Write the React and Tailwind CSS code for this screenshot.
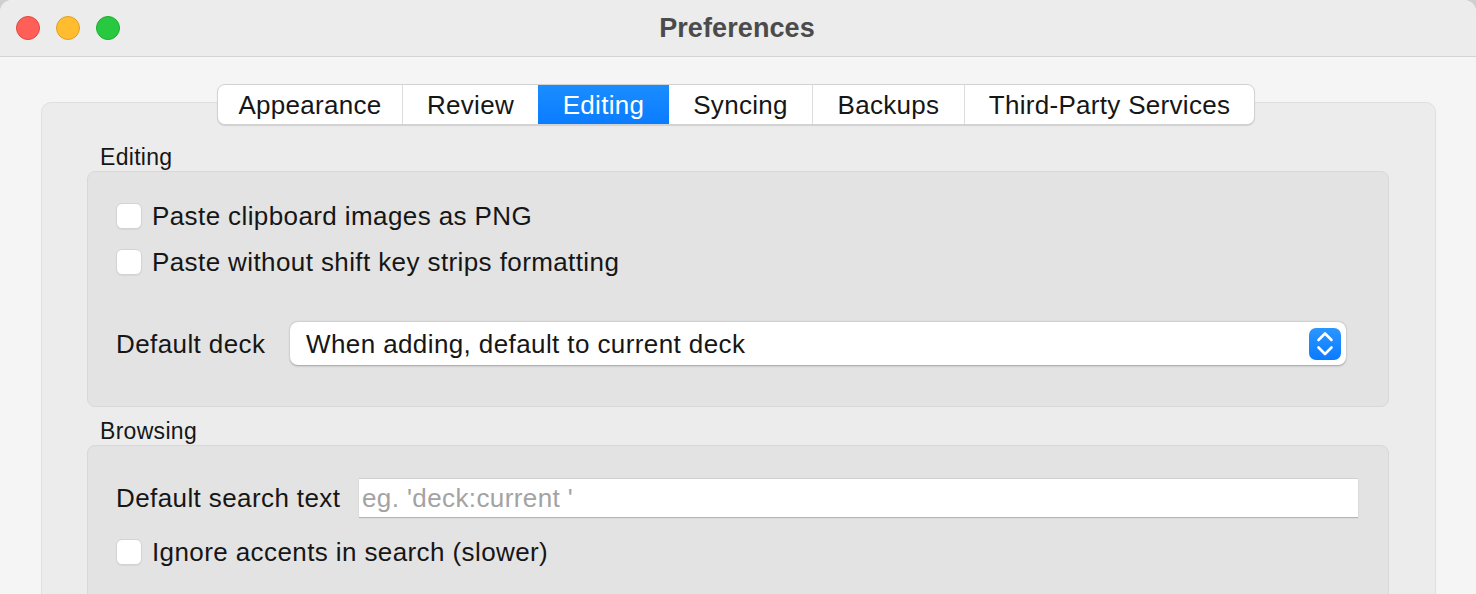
const tabs = [
  { label: "Appearance", w: "w-[184px]" },
  { label: "Review", w: "w-[136px]" },
  { label: "Editing", w: "w-[131px]", active: true },
  { label: "Syncing", w: "w-[143px]" },
  { label: "Backups", w: "w-[152px]" },
  { label: "Third-Party Services", w: "w-[290px]" },
]

const Checkbox = () => (
  <span className="block w-[26px] h-[26px] shrink-0 rounded-[6px] bg-white border border-[#d3d3d3] shadow-[0_1px_1px_rgba(0,0,0,0.06)]" />
)

const CheckRow = ({ label, className = "" }) => (
  <div className={`flex items-center h-[36px] gap-[10px] ${className}`}>
    <Checkbox />
    <span className="text-[26px] leading-none tracking-[0.4px]">{label}</span>
  </div>
)

const Stepper = () => (
  <svg width="32" height="32" viewBox="0 0 32 32" className="shrink-0">
    <defs>
      <linearGradient id="stp" x1="0" y1="0" x2="0" y2="1">
        <stop offset="0" stopColor="#2b96ff" />
        <stop offset="1" stopColor="#0a7bff" />
      </linearGradient>
    </defs>
    <rect x="0" y="0" width="32" height="32" rx="7" fill="url(#stp)" />
    <path d="M9.5 12 L16 5.5 L22.5 12" fill="none" stroke="#fff" strokeWidth="2.6" strokeLinecap="round" strokeLinejoin="round" />
    <path d="M9.5 19.5 L16 26 L22.5 19.5" fill="none" stroke="#fff" strokeWidth="2.6" strokeLinecap="round" strokeLinejoin="round" />
  </svg>
)

const App = () => {
  return (
    <div className="w-[1476px] h-[594px] overflow-hidden bg-[#cfcfcf] font-['Liberation_Sans',Arial,sans-serif] text-[#161616]">
      <div className="h-full rounded-t-[12px] overflow-hidden bg-[#f5f5f5]">
        {/* title bar */}
        <div className="h-[57px] grid grid-cols-[1fr_auto_1fr] items-center bg-[#ececec] border-b border-[#d4d4d4]">
          <div className="flex items-center gap-[16px] pl-[16px]">
            <span className="block w-[24px] h-[24px] rounded-full bg-[#ff5f57] border border-[#e2463f]" />
            <span className="block w-[24px] h-[24px] rounded-full bg-[#febc2e] border border-[#dfa123]" />
            <span className="block w-[24px] h-[24px] rounded-full bg-[#28c840] border border-[#1dad2b]" />
          </div>
          <div className="text-[27px] font-bold text-[#4b4b4b] leading-none pr-[2px] tracking-[0.1px]">Preferences</div>
          <div />
        </div>

        {/* content */}
        <div className="pt-[27px]">
          <div className="relative z-10 flex justify-center pr-[4px]">
            <div className="flex h-[41px] rounded-[8px] bg-white border border-[#d2d2d2] shadow-[0_1px_1px_rgba(0,0,0,0.12)] overflow-hidden">
              {tabs.map((t, i) => {
                const divider = i > 0 && !t.active && !tabs[i - 1].active
                return (
                  <div
                    key={t.label}
                    className={`${t.w} h-full flex items-center justify-center text-[26px] leading-none tracking-[0.3px] ${
                      t.active ? "bg-gradient-to-b from-[#1a8dff] to-[#0a7cff] text-white" : ""
                    } ${divider ? "border-l border-[#dcdcdc]" : ""}`}
                  >
                    {t.label}
                  </div>
                )
              })}
            </div>
          </div>

          <div className="ml-[41px] w-[1395px] -mt-[23px] h-[520px] bg-[#ececec] border border-[#dfdfdf] rounded-[10px] pt-[42px] pl-[45px] pr-[46px]">
            <div className="h-[24px] pl-[13px] text-[23px] leading-[24px] tracking-[0.3px]">Editing</div>
            <div className="mt-[2px] bg-[#e3e3e3] border border-[#d8d8d8] rounded-[8px] pt-[26px] pb-[41px] pl-[28px]">
              <CheckRow label="Paste clipboard images as PNG" />
              <CheckRow label="Paste without shift key strips formatting" className="mt-[10px]" />
              <div className="mt-[42px] flex items-center h-[43px]">
                <span className="w-[174px] text-[26px] leading-none tracking-[0.4px]">Default deck</span>
                <div className="w-[1056px] h-[43px] flex items-center justify-between pl-[16px] pr-[5px] bg-white rounded-[8px] shadow-[0_0.5px_2px_rgba(0,0,0,0.3)]">
                  <span className="text-[26px] leading-none tracking-[0.4px]">When adding, default to current deck</span>
                  <Stepper />
                </div>
              </div>
            </div>

            <div className="mt-[12px] h-[24px] pl-[13px] text-[23px] leading-[24px] tracking-[0.3px]">Browsing</div>
            <div className="mt-[2px] h-[200px] bg-[#e3e3e3] border border-[#d8d8d8] rounded-[8px] pt-[32px] pl-[28px]">
              <div className="flex items-center h-[39px]">
                <span className="w-[243px] text-[26px] leading-none tracking-[0.4px]">Default search text</span>
                <div className="w-[999px] h-[39px] flex items-center pl-[3px] bg-white border-t border-[#d0d0d0] shadow-[0_1px_1px_rgba(0,0,0,0.2)]">
                  <span className="text-[26px] leading-none tracking-[0.4px] text-[#a3a3a3]">eg. 'deck:current '</span>
                </div>
              </div>
              <CheckRow label="Ignore accents in search (slower)" className="mt-[17px]" />
            </div>
          </div>
        </div>
      </div>
    </div>
  )
}

export default App
